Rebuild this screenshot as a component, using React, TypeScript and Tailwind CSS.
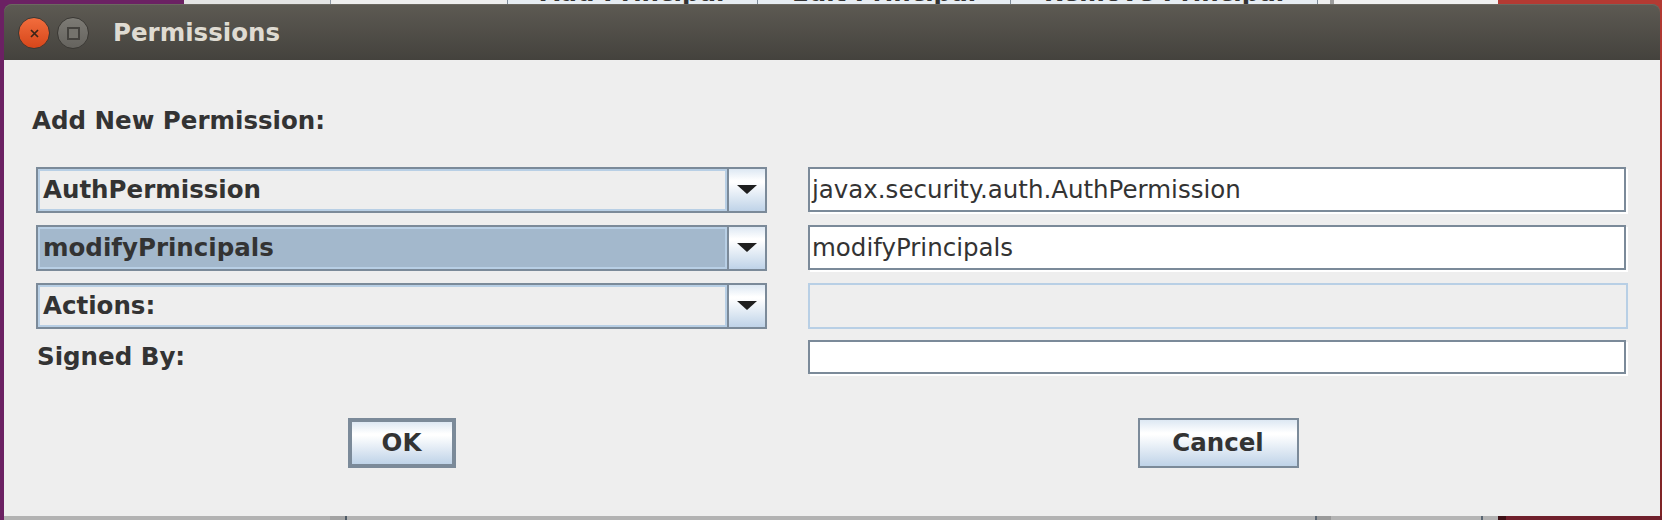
import React from 'react'

const GRAD = 'bg-[linear-gradient(to_bottom,#dde8f3_0%,#ffffff_28%,#ffffff_32%,#bfd3e8_100%)]'

const Combo: React.FC<{ label: string; selected?: boolean }> = ({ label, selected }) => (
  <div className="h-[46px] w-[731px] flex border-2 border-[#7b8a99]">
    <div
      className={`flex-1 flex items-center border-2 border-[#b8cfe5] pl-[3px] ${selected ? 'bg-[#a3b8cc]' : 'bg-[#eeeeee]'}`}
    >
      <span className="text-[24.5px] leading-[28px] font-bold text-[#333333]">{label}</span>
    </div>
    <div className={`w-[38px] flex items-center justify-center border-l-2 border-[#7b8a99] ${GRAD}`}>
      <svg width="20" height="10" viewBox="0 0 20 10">
        <polygon points="0,0 20,0 10,9" fill="#1f1f1f" />
      </svg>
    </div>
  </div>
)

const Field: React.FC<{ text?: string; h: string }> = ({ text, h }) => (
  <div
    className={`w-[818px] ${h} flex items-center border-2 border-[#7b8a99] bg-white pl-[2px] shadow-[2px_2px_0_#ffffff]`}
  >
    {text && <span className="text-[24.5px] leading-[28px] text-[#333333]">{text}</span>}
  </div>
)

const Button: React.FC<{ label: string; w: string; thick?: boolean }> = ({ label, w, thick }) => (
  <div
    className={`${w} h-[50px] flex items-center justify-center ${thick ? 'border-4' : 'border-2'} border-[#7b8a99] ${GRAD}`}
  >
    <span className="text-[24.5px] leading-[28px] font-bold text-[#333333]">{label}</span>
  </div>
)

// buttons of the window behind: only their bottom edge peeks out above the dialog
const BackButton: React.FC<{ label: string; w: string }> = ({ label, w }) => (
  <div className={`${w} h-[4px] overflow-hidden border-l border-[#7e8b99] bg-[#e6ecf2] flex justify-center`}>
    <span className="-mt-[21px] text-[24.5px] leading-[28px] font-bold text-[#333333] whitespace-nowrap">{label}</span>
  </div>
)

export default function App() {
  return (
    <div className="w-[1662px] h-[520px] flex flex-col overflow-hidden bg-[#6b2163] font-['DejaVu_Sans',sans-serif]">
      {/* window behind, top edge */}
      <div className="h-[4px] flex">
        <div className="w-[184px] bg-[#6b2163]" />
        <div className="w-[146px] bg-[#e4e4e4]" />
        <div className="w-[1px] bg-[#8e99a5]" />
        <div className="w-[176px] bg-[#eeeeee]" />
        <BackButton label="Add Principal" w="w-[250px]" />
        <BackButton label="Edit Principal" w="w-[253px]" />
        <BackButton label="Remove Principal" w="w-[307px]" />
        <div className="w-[13px] border-l border-[#7e8b99] bg-[#eeeeee]" />
        <div className="w-[4px] bg-[#9c9c9c]" />
        <div className="w-[164px] bg-[#f0f0f0]" />
        <div className="flex-1 bg-[#b33a33]" />
      </div>

      <div className="h-[512px] flex bg-[linear-gradient(to_right,#6b2163_50%,#b33a33_50%)]">
        <div className="w-[4px] bg-[#6b2163]" />

        {/* dialog */}
        <div className="w-[1656px] flex flex-col">
          <div className="h-[56px] flex items-center pl-[14px] pt-[2px] rounded-t-[8px] bg-[linear-gradient(to_bottom,#5d5a53,#44423d)] shadow-[inset_0_1px_0_#6b6860]">
            <div className="w-[32px] h-[32px] rounded-full border border-[#3a3834] bg-[linear-gradient(to_bottom,#f26d3d,#d6461a)] flex items-center justify-center">
              <svg width="11" height="11" viewBox="0 0 11 11">
                <path d="M2 2 L9 9 M9 2 L2 9" stroke="#3b2418" strokeWidth="1.7" />
              </svg>
            </div>
            <div className="ml-[7px] w-[32px] h-[32px] rounded-full border border-[#3a3834] bg-[linear-gradient(to_bottom,#7d7b75,#65635e)] flex items-center justify-center">
              <div className="w-[13px] h-[13px] border-2 border-[#44423e] bg-[#75736d]" />
            </div>
            <span className="ml-[24px] text-[24.5px] leading-[28px] font-bold text-[#dfdbd2]">Permissions</span>
          </div>

          <div className="flex-1 bg-[#eeeeee] pl-[28px] pt-[47px]">
            <div className="h-[28px] text-[24.5px] leading-[28px] font-bold text-[#333333]">Add New Permission:</div>

            <div className="mt-[32px] pl-[4px] flex gap-[41px]">
              <div className="w-[731px] flex flex-col">
                <Combo label="AuthPermission" />
                <div className="mt-[12px]">
                  <Combo label="modifyPrincipals" selected />
                </div>
                <div className="mt-[12px]">
                  <Combo label="Actions:" />
                </div>
                <div className="mt-[11px] h-[34px] pl-[1px] flex items-center">
                  <span className="text-[24.5px] leading-[28px] font-bold text-[#333333]">Signed By:</span>
                </div>
              </div>

              <div className="w-[820px] flex flex-col">
                <div className="h-[46px]">
                  <Field text="javax.security.auth.AuthPermission" h="h-[45px]" />
                </div>
                <div className="mt-[12px] h-[46px]">
                  <Field text="modifyPrincipals" h="h-[45px]" />
                </div>
                <div className="mt-[12px] h-[46px] w-[820px] border-2 border-[#b8cfe5] bg-[#eeeeee]" />
                <div className="mt-[11px]">
                  <Field h="h-[34px]" />
                </div>
              </div>
            </div>

            <div className="mt-[44px] pl-[4px] flex gap-[41px]">
              <div className="w-[731px] flex justify-center">
                <Button label="OK" w="w-[108px]" thick />
              </div>
              <div className="w-[820px] flex justify-center">
                <Button label="Cancel" w="w-[161px]" />
              </div>
            </div>
          </div>
        </div>

        <div className="w-[2px] bg-[linear-gradient(to_bottom,#b33a33,#7d2326)]" />
      </div>

      {/* window behind, bottom edge */}
      <div className="h-[4px] flex">
        <div className="w-[4px] bg-[#6b2163]" />
        <div className="w-[326px] bg-[#b2b2b2]" />
        <div className="w-[15px] bg-[#a2a2a2]" />
        <div className="w-[2px] bg-[#4e5a66]" />
        <div className="w-[968px] bg-[#b2b2b2]" />
        <div className="w-[2px] bg-[#5a6672]" />
        <div className="w-[14px] bg-[#9a9a9a]" />
        <div className="w-[150px] bg-[#b4b4b4]" />
        <div className="w-[2px] bg-[#5a6672]" />
        <div className="w-[15px] bg-[#b2b2b2]" />
        <div className="w-[8px] bg-[#3d1016]" />
        <div className="flex-1 bg-[#6f1f2b]" />
      </div>
    </div>
  )
}
